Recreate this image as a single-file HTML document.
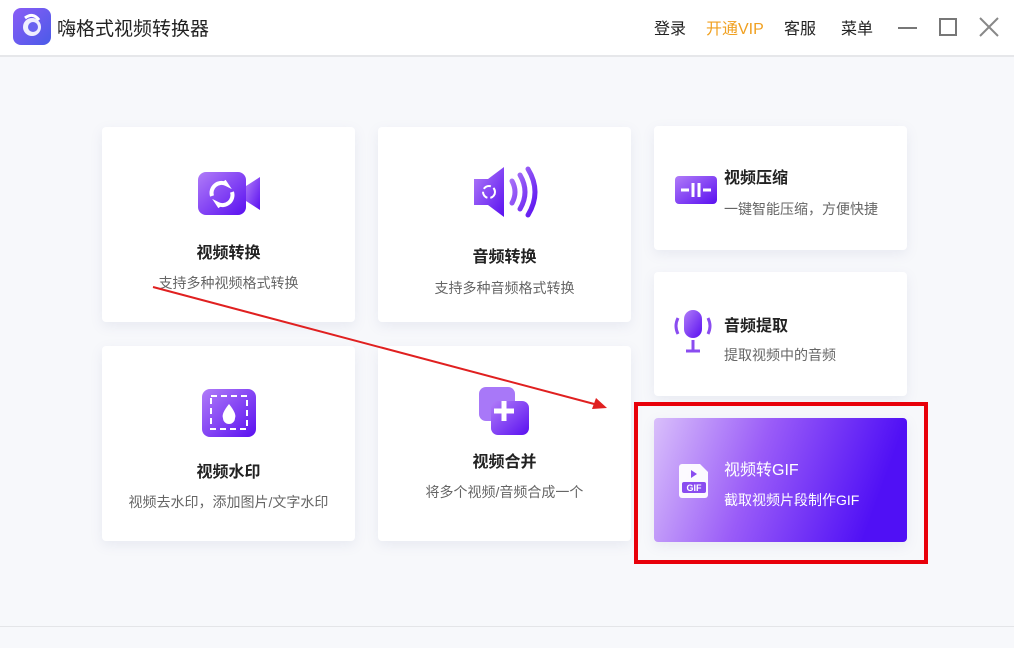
<!DOCTYPE html><html><head><meta charset="utf-8"><style>
*{margin:0;padding:0;box-sizing:border-box}
body{width:1014px;height:648px;overflow:hidden;background:#f7f8fb;font-family:"Liberation Sans","Noto Sans CJK SC",sans-serif;position:relative}
.hd{position:absolute;left:0;top:0;width:1014px;height:57px;background:#fff;border-bottom:2px solid #e6e7ea}
.card{position:absolute;background:#fff;border-radius:4px;box-shadow:0 4px 12px rgba(120,130,170,.12);text-align:center}
.t{font-size:16px;font-weight:bold;color:#222}
.s{font-size:14px;color:#666}
.abs{position:absolute}
</style></head><body>
<div class="hd">
 <div class="abs" style="left:13px;top:8px;width:38px;height:37px;border-radius:8px;background:linear-gradient(135deg,#8a5cf6,#4a5be8)">
  <svg width="38" height="37" viewBox="0 0 38 37"><circle cx="19" cy="19" r="9" fill="#fff" opacity=".9"/><circle cx="20" cy="19" r="5" fill="#6a63f0"/><path d="M12 10q8-6 14 2" stroke="#fff" stroke-width="3" fill="none"/></svg>
 </div>
 <div class="abs" style="left:57px;top:14px;font-size:19px;color:#222">嗨格式视频转换器</div>
 <div class="abs" style="left:654px;top:15px;font-size:16px;color:#222">登录</div>
 <div class="abs" style="left:706px;top:15px;font-size:16px;color:#f0a020">开通VIP</div>
 <div class="abs" style="left:784px;top:15px;font-size:16px;color:#222">客服</div>
 <div class="abs" style="left:841px;top:15px;font-size:16px;color:#222">菜单</div>
 <div class="abs" style="left:898px;top:27px;width:19px;height:2px;background:#777"></div>
 <div class="abs" style="left:939px;top:18px;width:18px;height:18px;border:2px solid #777"></div>
 <svg class="abs" style="left:979px;top:17px" width="20" height="20"><path d="M1 1L19 19M19 1L1 19" stroke="#888" stroke-width="2"/></svg>
</div>
<svg width="0" height="0"><defs><linearGradient id="g" x1="0" y1="0" x2="1" y2="1"><stop offset="0" stop-color="#b07cf8"/><stop offset="1" stop-color="#5a10f0"/></linearGradient></defs></svg>

<div class="card" style="left:102px;top:127px;width:253px;height:195px">
 <svg class="abs" style="left:96px;top:45px" width="64" height="44"><rect x="0" y="0" width="48" height="43" rx="8" fill="url(#g)"/><path d="M48 14L62 5V38L48 29Z" fill="url(#g)"/><path d="M14 24a10 10 0 0 1 14-12l-2-3M34 20a10 10 0 0 1-14 12l2 3" stroke="#fff" stroke-width="4" fill="none"/></svg>
 <div class="t abs" style="left:0;right:0;top:112px">视频转换</div>
 <div class="s abs" style="left:0;right:0;top:146px">支持多种视频格式转换</div>
</div>
<div class="card" style="left:378px;top:127px;width:253px;height:195px">
 <svg class="abs" style="left:94px;top:38px" width="66" height="54"><path d="M2 14h14L32 2v50L16 40H2Z" fill="url(#g)"/><path d="M40 16q6 11 0 22M48 10q10 17 0 34M56 4q14 23 0 46" stroke="url(#g)" stroke-width="5" fill="none" stroke-linecap="round"/><circle cx="17" cy="27" r="6" stroke="#fff" stroke-width="2" fill="none" stroke-dasharray="8 3"/></svg>
 <div class="t abs" style="left:0;right:0;top:116px">音频转换</div>
 <div class="s abs" style="left:0;right:0;top:151px">支持多种音频格式转换</div>
</div>
<div class="card" style="left:654px;top:126px;width:253px;height:124px;text-align:left">
 <svg class="abs" style="left:21px;top:50px" width="42" height="28"><rect width="42" height="28" rx="4" fill="url(#g)"/><path d="M6 14h8M36 14h-8M18 7v14M24 7v14" stroke="#fff" stroke-width="3"/></svg>
 <div class="t abs" style="left:70px;top:38px">视频压缩</div>
 <div class="s abs" style="left:70px;top:73px">一键智能压缩，方便快捷</div>
</div>
<div class="card" style="left:654px;top:272px;width:253px;height:124px;text-align:left">
 <svg class="abs" style="left:20px;top:38px" width="38" height="44"><rect x="10" y="0" width="18" height="28" rx="9" fill="url(#g)"/><path d="M19 30v10M12 41h14M4 8q-4 8 0 16M34 8q4 8 0 16" stroke="#8a4cf0" stroke-width="3" fill="none"/></svg>
 <div class="t abs" style="left:70px;top:40px">音频提取</div>
 <div class="s abs" style="left:70px;top:73px">提取视频中的音频</div>
</div>
<div class="card" style="left:102px;top:346px;width:253px;height:195px">
 <svg class="abs" style="left:100px;top:43px" width="54" height="48"><rect width="54" height="48" rx="8" fill="url(#g)"/><rect x="9" y="7" width="36" height="33" fill="none" stroke="#fff" stroke-width="2" stroke-dasharray="6 4"/><path d="M27 15q8 10 6 14a6 6 0 0 1-12 0q-2-4 6-14" fill="#fff"/></svg>
 <div class="t abs" style="left:0;right:0;top:112px">视频水印</div>
 <div class="s abs" style="left:0;right:0;top:146px">视频去水印，添加图片/文字水印</div>
</div>
<div class="card" style="left:378px;top:346px;width:253px;height:195px">
 <svg class="abs" style="left:101px;top:41px" width="52" height="50"><rect width="36" height="34" rx="7" fill="#a878f8"/><rect x="12" y="14" width="38" height="34" rx="7" fill="url(#g)"/><path d="M25 14v20M15 24h20" stroke="#fff" stroke-width="5"/></svg>
 <div class="t abs" style="left:0;right:0;top:102px">视频合并</div>
 <div class="s abs" style="left:0;right:0;top:136px">将多个视频/音频合成一个</div>
</div>
<div class="card" style="left:654px;top:418px;width:253px;height:124px;text-align:left;background:linear-gradient(110deg,#d9bffa 0%,#9a5cf8 40%,#5010f5 85%)">
 <svg class="abs" style="left:25px;top:46px" width="30" height="34"><path d="M3 0h18l8 8v23a3 3 0 0 1-3 3H3a3 3 0 0 1-3-3V3a3 3 0 0 1 3-3Z" fill="#fff" opacity=".95"/><path d="M12 6l6 4-6 4Z" fill="#8a4cf0"/><rect x="3" y="18" width="24" height="11" rx="2" fill="#8a4cf0"/><text x="15" y="27" font-size="9" font-weight="bold" fill="#fff" text-anchor="middle" font-family="Liberation Sans">GIF</text></svg>
 <div class="abs" style="left:70px;top:38px;font-size:16px;color:#fff">视频转GIF</div>
 <div class="abs" style="left:70px;top:72px;font-size:14px;color:#fff">截取视频片段制作GIF</div>
</div>
<div class="abs" style="left:634px;top:402px;width:294px;height:162px;border:4px solid #e8000a"></div>
<svg class="abs" style="left:0;top:0" width="1014" height="648"><line x1="153" y1="287" x2="598" y2="405" stroke="#e02020" stroke-width="2"/><path d="M607 408L592 409L596 398Z" fill="#e02020"/></svg>
<div class="abs" style="left:0;top:626px;width:1014px;height:1px;background:#e4e5e8"></div>
</body></html>
